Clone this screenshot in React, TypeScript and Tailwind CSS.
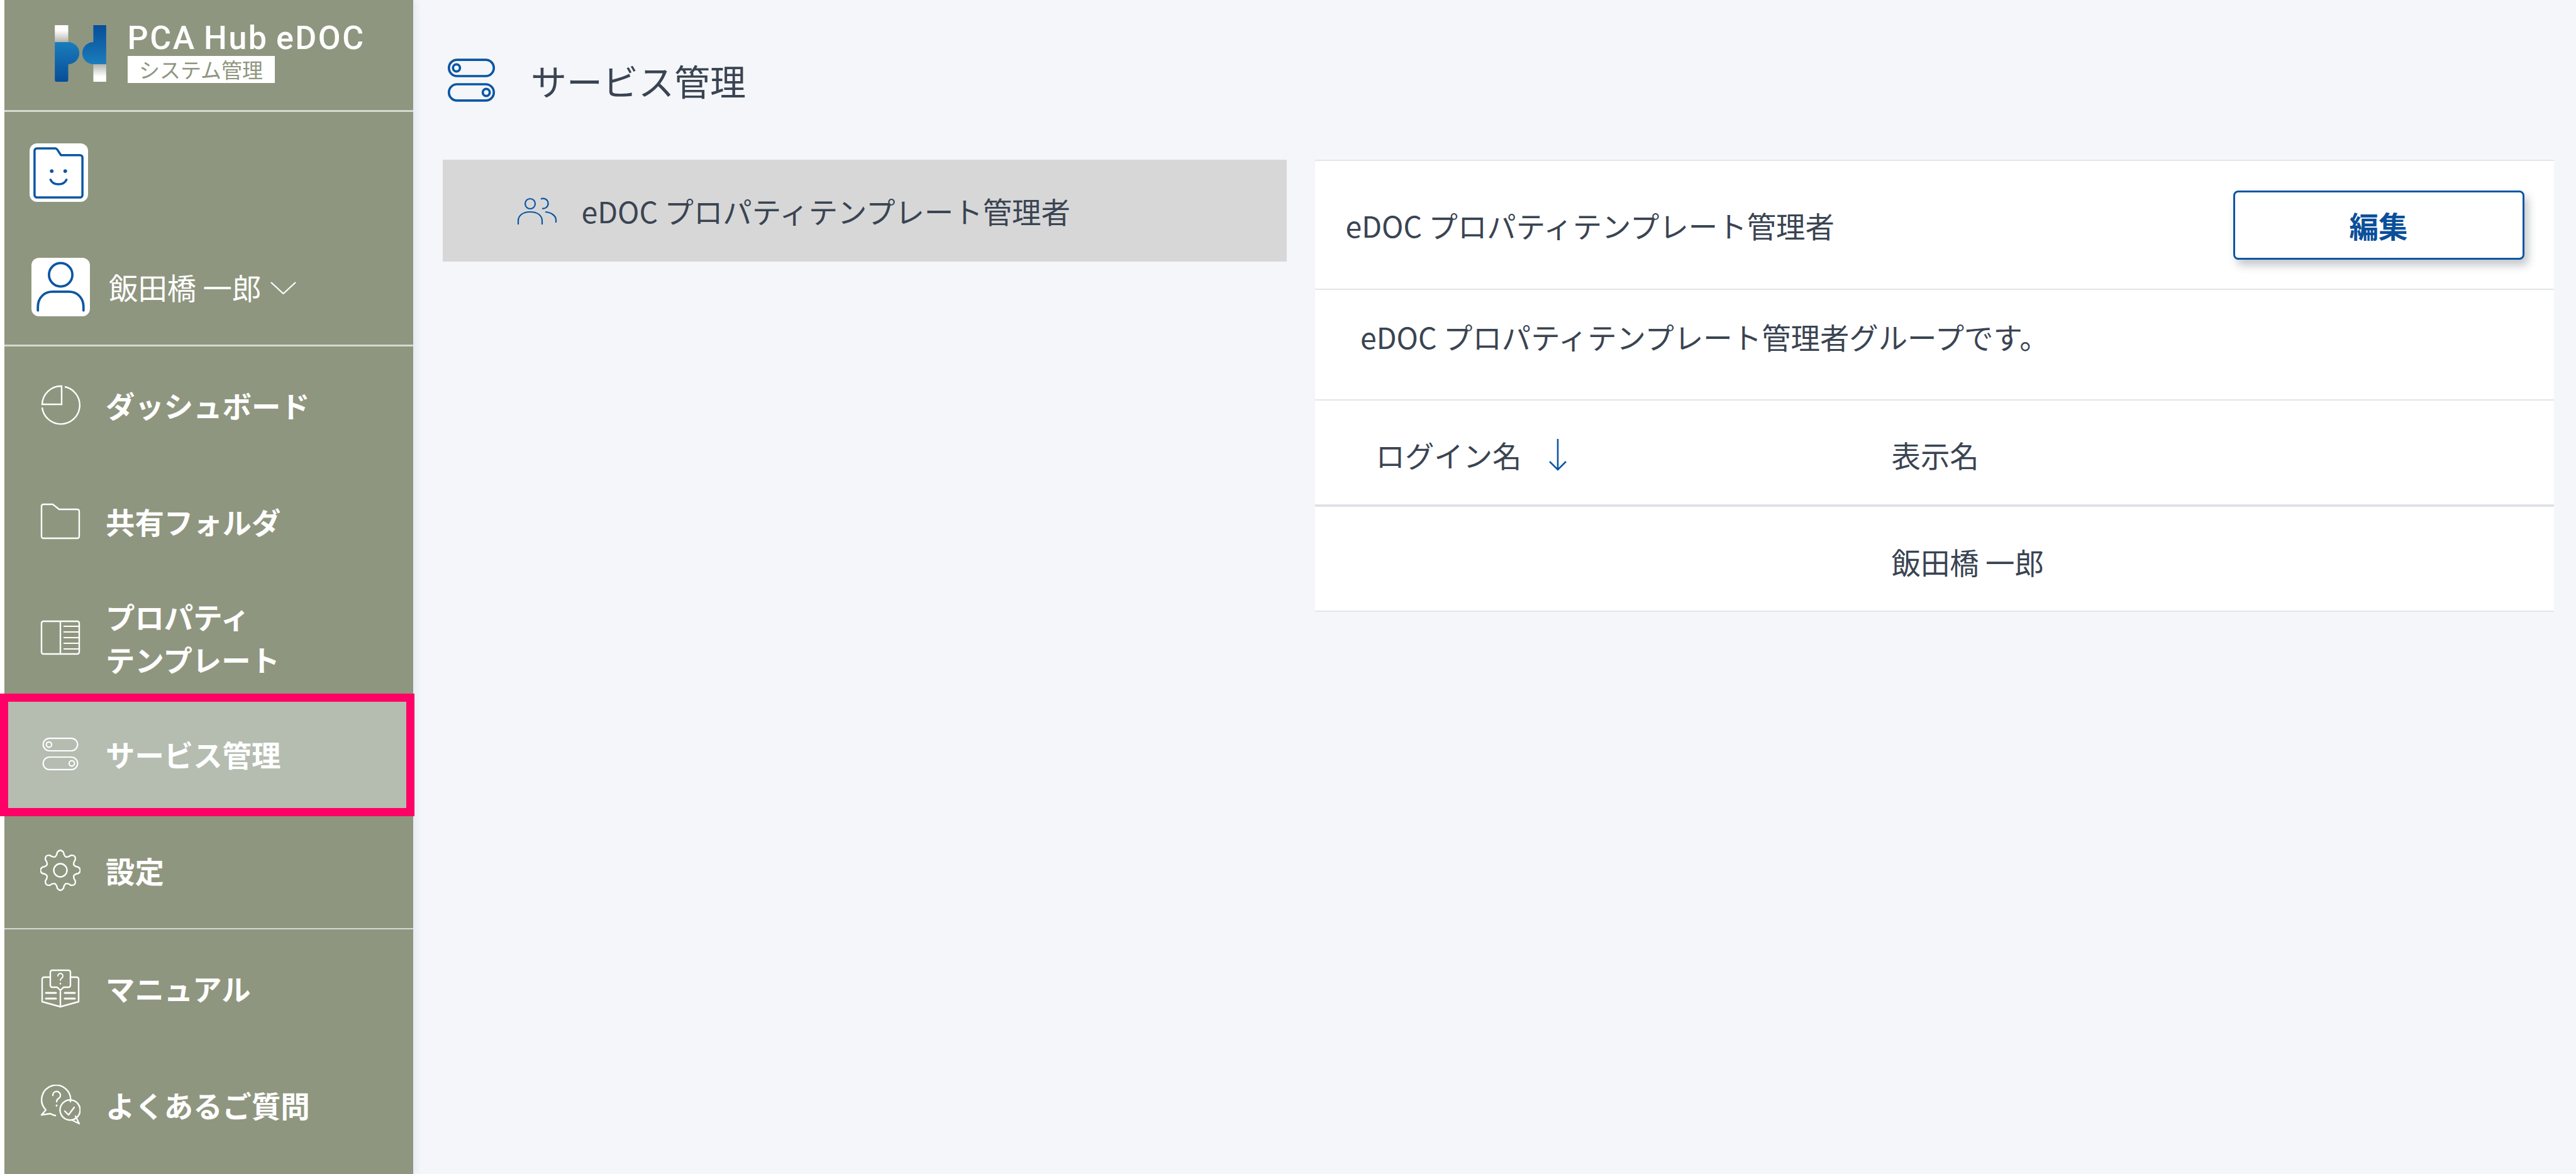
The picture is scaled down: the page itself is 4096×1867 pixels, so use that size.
const BLUE = "#0a56a3";

function gearPath() {
  const cx = 32;
  const cy = 32;
  const teeth = 8;
  let d = "";
  for (let i = 0; i < teeth; i++) {
    const a = (i / teeth) * Math.PI * 2 - Math.PI / 2;
    const step = (Math.PI * 2) / teeth;
    const pt = (r: number, t: number) =>
      `${(cx + r * Math.cos(t)).toFixed(2)} ${(cy + r * Math.sin(t)).toFixed(2)}`;
    d += `${i === 0 ? "M" : "L"}${pt(23, a - step * 0.5)} `;
    d += `Q${pt(24, a - step * 0.3)} ${pt(29, a - step * 0.22)} `;
    d += `Q${pt(35, a)} ${pt(29, a + step * 0.22)} `;
    d += `Q${pt(24, a + step * 0.3)} ${pt(23, a + step * 0.5)} `;
  }
  return d + "Z";
}

function Logo() {
  return (
    <svg viewBox="0 0 88 97" className="h-[90px] w-[82px] shrink-0">
      <defs>
        <linearGradient id="blueUp" x1="0" y1="0" x2="0" y2="1">
          <stop offset="0" stopColor="#1b7dbb" />
          <stop offset="1" stopColor="#064d99" />
        </linearGradient>
        <linearGradient id="blueDown" x1="0" y1="0" x2="0" y2="1">
          <stop offset="0" stopColor="#064d99" />
          <stop offset="1" stopColor="#1b7dbb" />
        </linearGradient>
        <linearGradient id="whiteTop" x1="0" y1="0" x2="0" y2="1">
          <stop offset="0.3" stopColor="#ffffff" />
          <stop offset="1" stopColor="#b5b5ae" />
        </linearGradient>
        <linearGradient id="whiteBottom" x1="0" y1="0" x2="0" y2="1">
          <stop offset="0" stopColor="#b5b5ae" />
          <stop offset="0.7" stopColor="#ffffff" />
        </linearGradient>
      </defs>
      <rect x="0" y="0" width="23" height="29" fill="url(#whiteTop)" />
      <path d="M0 29H23a19 19 0 0 1 0 38V94a3 3 0 0 1-3 3H3a3 3 0 0 1-3-3Z" fill="url(#blueUp)" />
      <path d="M66 0H88V67H66a19 19 0 0 1 0-38Z" fill="url(#blueDown)" />
      <rect x="66" y="67" width="22" height="30" fill="url(#whiteBottom)" />
    </svg>
  );
}

function ToggleIcon({ className, color, width }: { className: string; color: string; width: number }) {
  return (
    <svg viewBox="0 0 83 76" fill="none" stroke={color} strokeWidth={width} className={className}>
      <rect x="3" y="3" width="77" height="28" rx="14" />
      <circle cx="16" cy="17" r="6" />
      <rect x="3" y="45" width="77" height="28" rx="14" />
      <circle cx="67" cy="59" r="6" />
    </svg>
  );
}

function PieIcon() {
  return (
    <svg viewBox="0 0 64 64" fill="none" stroke="white" strokeWidth="2.4" className="size-[64px]">
      <path d="M34 2A30 30 0 0 0 3 31H34Z" />
      <path d="M39 3A30 30 0 1 1 3 36" />
    </svg>
  );
}

function FolderIcon() {
  return (
    <svg viewBox="0 0 64 64" fill="none" stroke="white" strokeWidth="2.4" className="size-[64px]">
      <path d="M2 8a3 3 0 0 1 3-3H20L30 13H59a3 3 0 0 1 3 3V56a3 3 0 0 1-3 3H5a3 3 0 0 1-3-3Z" strokeLinejoin="round" />
    </svg>
  );
}

function TemplateIcon() {
  return (
    <svg viewBox="0 0 64 64" fill="none" stroke="white" strokeWidth="2.4" className="size-[64px]">
      <rect x="2" y="6" width="60" height="52" rx="3" />
      <path d="M32 6V58" />
      <path d="M37 14H62M37 23H62M37 32H62M37 41H62M37 50H62" strokeWidth="2" />
    </svg>
  );
}

function GearIcon() {
  return (
    <svg viewBox="0 0 64 68" fill="none" stroke="white" strokeWidth="2.4" className="h-[68px] w-[64px]">
      <g transform="translate(0 2)">
        <path d={gearPath()} strokeLinejoin="round" />
        <circle cx="32" cy="32" r="10.5" />
      </g>
    </svg>
  );
}

function ManualIcon() {
  return (
    <svg viewBox="0 0 64 64" fill="none" stroke="white" strokeWidth="2.4" strokeLinejoin="round" strokeLinecap="round" className="size-[64px]">
      <path d="M19 4H45a3 3 0 0 1 3 3V28a3 3 0 0 1-3 3H37L32 36L27 31H19a3 3 0 0 1-3-3V7a3 3 0 0 1 3-3Z" />
      <path d="M28 13a4 4 0 1 1 6 3.5c-1.5 1-2 1.800-2 3.500" strokeWidth="2" />
      <path d="M32 25V25.500" strokeWidth="2.400" />
      <path d="M16 15H6a3 3 0 0 0-3 3V54l29 8l29-8V18a3 3 0 0 0-3-3H48" />
      <path d="M32 38V62" />
      <path d="M9 40H25M9 49H25M39 40H55M39 49H55" strokeWidth="3" />
    </svg>
  );
}

function FaqIcon() {
  return (
    <svg viewBox="0 0 64 64" fill="none" stroke="white" strokeWidth="2.4" strokeLinejoin="round" strokeLinecap="round" className="size-[64px]">
      <path d="M48 27A23 23 0 1 0 9 40L2 48L16 46A23 23 0 0 0 24 49" />
      <path d="M20 17a6 6 0 1 1 9 5c-2 1.300-3 2.500-3 5" />
      <path d="M26 33V33.500" strokeWidth="2.800" />
      <path d="M36 29A16 16 0 1 1 50 56L62 62L56 50" />
      <path d="M36 29A16 16 0 0 0 50 56" />
      <path d="M39 42L45 48L54 36" />
    </svg>
  );
}

function NavRow({
  icon,
  height,
  children,
  active,
}: {
  icon: React.ReactNode;
  height: string;
  children: React.ReactNode;
  active?: boolean;
}) {
  return (
    <div className={`relative flex items-center gap-[40px] pl-[57.5px] ${height} ${active ? "bg-[#b5bdb1]" : ""}`}>
      <div className="flex w-[64px] shrink-0 items-center justify-center">{icon}</div>
      <div className="text-[46.4px] leading-[68px] font-bold text-white">{children}</div>
      {active && (
        <div className="absolute top-[-3px] left-[-6.5px] h-[195px] w-[659px] border-[13px] border-[#ff0066]" />
      )}
    </div>
  );
}

function Sidebar() {
  return (
    <aside className="relative z-10 flex w-[650px] shrink-0 flex-col bg-[#8f967f] shadow-[5px_0_9px_#e6e9f4]">
      <div className="flex h-[178px] items-center gap-[33.500px] border-b-[3px] border-[#d6dad2] pb-[5px] pl-[80.500px]">
        <Logo />
        <div className="flex flex-col">
          <div className="font-['Roboto',sans-serif] text-[52px] leading-[44px] font-medium tracking-[2.500px] whitespace-nowrap text-white [word-spacing:-3px]">
            PCA Hub eDOC
          </div>
          <div className="mt-[6px] flex h-[43px] w-[234px] items-center justify-center bg-white text-[33px] leading-none text-[#8f967f]">
            システム管理
          </div>
        </div>
      </div>

      <div className="flex h-[373px] flex-col border-b-[3px] border-[#d6dad2] pt-[50px]">
        <div className="ml-[40px] flex size-[93px] items-center justify-center rounded-[12px] bg-white">
          <svg viewBox="0 0 82 86" fill="none" stroke={BLUE} strokeWidth="3.600" className="size-[84px]">
            <path d="M2 7a4 4 0 0 1 4-4H36a4 4 0 0 1 3 2L45 14H76a4 4 0 0 1 4 4V79a4 4 0 0 1-4 4H6a4 4 0 0 1-4-4Z" strokeLinejoin="round" />
            <circle cx="30" cy="40" r="3" fill={BLUE} stroke="none" />
            <circle cx="52" cy="40" r="3" fill={BLUE} stroke="none" />
            <path d="M28 54a14 12 0 0 0 26 0" strokeLinecap="round" />
          </svg>
        </div>
        <div className="mt-[89px] ml-[43.500px] flex items-center">
          <div className="flex size-[93px] items-center justify-center rounded-[12px] bg-white">
            <svg viewBox="0 0 100 100" fill="none" stroke={BLUE} strokeWidth="4" strokeLinecap="round" className="size-[93px]">
              <ellipse cx="50" cy="29" rx="20" ry="20" />
              <path d="M11 90V84C11 68 22 58 36 58H64C78 58 89 68 89 84V90" />
            </svg>
          </div>
          <div className="ml-[30px] text-[46.4px] leading-none whitespace-nowrap text-white">飯田橋 一郎</div>
          <svg viewBox="0 0 41 20" fill="none" stroke="white" strokeWidth="2.200" className="mt-[2px] ml-[15px] h-[20px] w-[41px]">
            <path d="M1 1L20.500 19L40 1" />
          </svg>
        </div>
      </div>

      <div className="flex flex-col border-b-[2px] border-[#d6dad2]">
        <NavRow height="h-[185px]" icon={<PieIcon />}>ダッシュボード</NavRow>
        <NavRow height="h-[185px]" icon={<FolderIcon />}>共有フォルダ</NavRow>
        <NavRow height="h-[185px]" icon={<TemplateIcon />}>
          プロパティ
          <br />
          テンプレート
        </NavRow>
        <NavRow height="h-[185px]" active icon={<ToggleIcon className="h-[54px] w-[60px]" color="white" width={3} />}>
          サービス管理
        </NavRow>
        <NavRow height="h-[185px]" icon={<GearIcon />}>設定</NavRow>
      </div>

      <NavRow height="h-[186px]" icon={<ManualIcon />}>マニュアル</NavRow>
      <NavRow height="h-[186px]" icon={<FaqIcon />}>よくあるご質問</NavRow>
    </aside>
  );
}

function DetailPanel() {
  return (
    <section className="w-[1970px] shrink-0 bg-white">
      <div className="flex h-[207px] items-center justify-between border-y-[2px] border-[#e3e5ea] pr-[47px] pl-[49px]">
        <span>eDOC プロパティテンプレート管理者</span>
        <button className="h-[110px] w-[463px] rounded-[8px] border-[3px] border-[#0a56a3] bg-white text-[46.4px] font-bold text-[#0a4f9a] shadow-[6px_9px_14px_rgba(60,70,85,0.3)]">
          編集
        </button>
      </div>
      <div className="h-[176px] border-b-[2px] border-[#e3e5ea] pt-[44px] pl-[72.500px]">
        eDOC プロパティテンプレート管理者グループです。
      </div>
      <div className="grid h-[169px] grid-cols-[917px_1fr] items-center border-b-[4px] border-[#e0e2e8] pt-[6px]">
        <div className="flex items-center pl-[97px]">
          <span>ログイン名</span>
          <svg viewBox="0 0 32 52" fill="none" stroke={BLUE} strokeWidth="2.600" className="ml-[42px] h-[52px] w-[32px]">
            <path d="M16 1V50M3 37L16 50L29 37" />
          </svg>
        </div>
        <div>表示名</div>
      </div>
      <div className="grid h-[167px] grid-cols-[917px_1fr] items-center border-b-[2px] border-[#e3e5ea] pt-[8px]">
        <div />
        <div>飯田橋 一郎</div>
      </div>
    </section>
  );
}

export default function App() {
  return (
    <div className="flex h-[1867px] w-[4096px] overflow-hidden bg-white font-['Noto_Sans_CJK_JP',sans-serif] text-[46.4px] leading-[60px] text-[#3a4452]">
      <div className="w-[6.500px] shrink-0" />
      <Sidebar />
      <main className="flex-1 bg-[#f4f6f9] pl-[47px]">
        <header className="flex h-[254px] items-center gap-[56px] pl-[7.500px]">
          <ToggleIcon className="h-[71px] w-[77px]" color={BLUE} width={4} />
          <h1 className="text-[57px] leading-none font-normal">サービス管理</h1>
        </header>
        <div className="flex gap-[45px]">
          <div className="flex h-[162px] w-[1342px] shrink-0 items-center gap-[39px] bg-[#d7d7d7] pl-[118px]">
            <svg viewBox="0 0 64 45" fill="none" stroke={BLUE} strokeWidth="2.200" className="h-[45px] w-[64px]">
              <circle cx="21" cy="11" r="8" />
              <path d="M2 44V38C2 30 9 24 21 24C33 24 40 30 40 38V44" />
              <path d="M38 3.500a8 8 0 1 1 2 15" />
              <path d="M45 24C55 25 62 30 62 37V41" />
            </svg>
            <span>eDOC プロパティテンプレート管理者</span>
          </div>
          <DetailPanel />
        </div>
      </main>
    </div>
  );
}
